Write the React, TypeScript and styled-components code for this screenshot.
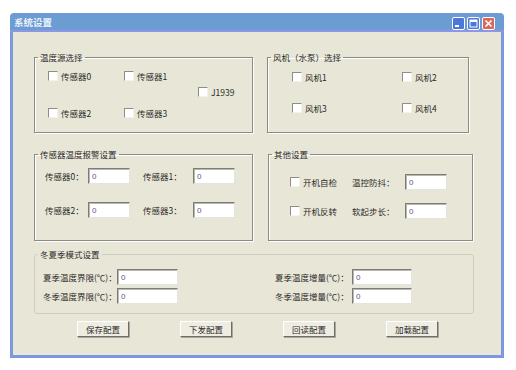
import { ReactElement } from 'react';
import styled, { createGlobalStyle } from 'styled-components';

const GlobalStyle = createGlobalStyle`
  html, body {
    margin: 0;
    padding: 0;
    background: #ffffff;
  }
  body {
    font-family: 'Noto Sans CJK SC', 'Liberation Sans', sans-serif;
  }
  #root {
    padding: 13px 0 0 10px;
  }
`;

const Window = styled.div`
  display: flex;
  flex-direction: column;
  width: 494px;
  height: 345px;
`;

const TitleBar = styled.div`
  align-items: center;
  background: #6b9cd2;
  border-bottom: 2px solid #9195e6;
  border-radius: 4px 4px 0 0;
  display: flex;
  height: 17px;
  justify-content: space-between;
  padding: 0 9px 0 4px;
`;

const Title = styled.span`
  color: #eef2fa;
  font-size: 9.5px;
  font-weight: 700;
  line-height: 12px;
`;

const TitleButtons = styled.div`
  display: flex;
  gap: 2px;
  margin-top: 3px;
`;

const TitleButton = styled.div<{ $close?: boolean }>`
  align-items: center;
  background: ${p => (p.$close ? '#d9675e' : '#4c78dc')};
  border: 1px solid #ffffff;
  border-radius: 2px;
  box-sizing: border-box;
  display: flex;
  height: 13px;
  justify-content: center;
  width: 13px;
`;

const Body = styled.div`
  background: #e8e6d6;
  border: 3px solid #7c98e0;
  border-top: none;
  display: flex;
  flex: 1;
  flex-direction: column;
  padding: 19px 0 0 21px;
`;

const Row = styled.div<{ $gap: number; $top: number }>`
  display: flex;
  gap: ${p => p.$gap}px;
  margin-top: ${p => p.$top}px;
`;

const Group = styled.fieldset<{ $w: number; $h: number; $soft?: boolean }>`
  border: 1px solid ${p => (p.$soft ? '#cfcebe' : '#8a8a82')};
  border-radius: ${p => (p.$soft ? '3px' : '0')};
  box-shadow: ${p => (p.$soft ? 'none' : '1px 1px 0 #ffffff, inset 1px 1px 0 #ffffff')};
  box-sizing: border-box;
  height: ${p => p.$h}px;
  margin: 0;
  min-width: 0;
  padding: 0;
  width: ${p => p.$w}px;
`;

const Legend = styled.legend`
  color: #2a2a2a;
  font-size: 8.5px;
  line-height: 12px;
  margin-left: 3px;
  padding: 0 2px;
`;

const Grid = styled.div<{ $cols: string; $rows: string; $rowGap?: number; $pad: string }>`
  align-items: start;
  display: grid;
  grid-template-columns: ${p => p.$cols};
  grid-template-rows: ${p => p.$rows};
  padding: ${p => p.$pad};
  row-gap: ${p => p.$rowGap ?? 0}px;
`;

const Check = styled.label<{ $col?: number; $row?: number; $h?: number }>`
  align-items: center;
  color: #2a2a2a;
  display: flex;
  font-size: 8.5px;
  gap: 3px;
  grid-column: ${p => p.$col ?? 'auto'};
  grid-row: ${p => p.$row ?? 'auto'};
  height: ${p => p.$h ?? 14}px;
  white-space: nowrap;
`;

const Box = styled.span`
  background: #ffffff;
  border: 1px solid;
  border-color: #8e8e86 #f2f2ee #f2f2ee #8e8e86;
  box-sizing: border-box;
  height: 10px;
  width: 10px;
`;

const FieldLabel = styled.span`
  align-items: center;
  color: #2a2a2a;
  display: flex;
  font-size: 8.5px;
  height: 16px;
  white-space: nowrap;
`;

const TextBox = styled.input<{ $w: number }>`
  background: #ffffff;
  border: 1px solid;
  border-color: #7d7d76 #e4e4de #e4e4de #7d7d76;
  box-shadow: inset 1px 1px 0 #b8b8b0;
  box-sizing: border-box;
  color: #6a4f8a;
  font-family: 'Liberation Sans', sans-serif;
  font-size: 8px;
  height: 16px;
  margin: 0;
  outline: none;
  padding: 0 0 0 3px;
  width: ${p => p.$w}px;
`;

const ButtonRow = styled.div`
  display: flex;
  gap: 51px;
  margin-top: 7px;
  padding-left: 43px;
`;

const Button = styled.button`
  background: #efede2;
  border: 1px solid;
  border-color: #ffffff #6e6e68 #6e6e68 #ffffff;
  box-shadow: 1px 1px 0 #a8a89e;
  color: #2a2a2a;
  font-family: 'Noto Sans CJK SC', sans-serif;
  font-size: 8.5px;
  height: 16px;
  line-height: 14px;
  padding: 0;
  width: 52px;
`;

function CheckItem({ text, col, row }: { text: string; col?: number; row?: number }): ReactElement {
  return (
    <Check $col={col} $row={row}>
      <Box />
      {text}
    </Check>
  );
}

function App(): ReactElement {
  return (
    <>
      <GlobalStyle />
      <Window>
        <TitleBar>
          <Title>系统设置</Title>
          <TitleButtons>
            <TitleButton>
              <svg width="9" height="9" viewBox="0 0 9 9">
                <rect x="1" y="6" width="4" height="2" fill="#ffffff" />
              </svg>
            </TitleButton>
            <TitleButton>
              <svg width="9" height="9" viewBox="0 0 9 9">
                <rect x="1" y="1" width="7" height="7" fill="none" stroke="#ffffff" strokeWidth="1" />
                <rect x="1" y="1" width="7" height="2" fill="#ffffff" />
              </svg>
            </TitleButton>
            <TitleButton $close>
              <svg width="9" height="9" viewBox="0 0 9 9">
                <path d="M1.5 1.5 L7.5 7.5 M7.5 1.5 L1.5 7.5" stroke="#ffffff" strokeWidth="1.6" />
              </svg>
            </TitleButton>
          </TitleButtons>
        </TitleBar>
        <Body>
          <Row $gap={14} $top={0}>
            <Group $w={219} $h={82}>
              <Legend>温度源选择</Legend>
              <Grid $cols="76px 74px auto" $rows="16px 21px 14px" $pad="6px 0 0 13px">
                <CheckItem text="传感器0" col={1} row={1} />
                <CheckItem text="传感器1" col={2} row={1} />
                <CheckItem text="J1939" col={3} row={2} />
                <CheckItem text="传感器2" col={1} row={3} />
                <CheckItem text="传感器3" col={2} row={3} />
              </Grid>
            </Group>
            <Group $w={202} $h={82}>
              <Legend>风机（水泵）选择</Legend>
              <Grid $cols="110px 110px" $rows="14px 14px" $rowGap={17} $pad="7px 0 0 24px">
                <CheckItem text="风机1" />
                <CheckItem text="风机2" />
                <CheckItem text="风机3" />
                <CheckItem text="风机4" />
              </Grid>
            </Group>
          </Row>

          <Row $gap={15} $top={15}>
            <Group $w={219} $h={93}>
              <Legend>传感器温度报警设置</Legend>
              <Grid $cols="43px 55px 50px 42px" $rows="16px 16px" $rowGap={18} $pad="8px 0 0 10px">
                <FieldLabel>传感器0：</FieldLabel>
                <TextBox $w={42} value="0" readOnly />
                <FieldLabel>传感器1：</FieldLabel>
                <TextBox $w={42} value="0" readOnly />
                <FieldLabel>传感器2：</FieldLabel>
                <TextBox $w={42} value="0" readOnly />
                <FieldLabel>传感器3：</FieldLabel>
                <TextBox $w={42} value="0" readOnly />
              </Grid>
            </Group>
            <Group $w={205} $h={93}>
              <Legend>其他设置</Legend>
              <Grid $cols="62px 53px 42px" $rows="16px 16px" $rowGap={13} $pad="14px 0 0 21px">
                <Check $h={16}>
                  <Box />
                  开机自检
                </Check>
                <FieldLabel>温控防抖：</FieldLabel>
                <TextBox $w={42} value="0" readOnly />
                <Check $h={16}>
                  <Box />
                  开机反转
                </Check>
                <FieldLabel>软起步长：</FieldLabel>
                <TextBox $w={42} value="0" readOnly />
              </Grid>
            </Group>
          </Row>

          <Row $gap={0} $top={7}>
            <Group $w={440} $h={66} $soft>
              <Legend>冬夏季模式设置</Legend>
              <Grid $cols="74px 158px 77px 60px" $rows="16px 16px" $rowGap={3} $pad="9px 0 0 8px">
                <FieldLabel>夏季温度界限(℃)：</FieldLabel>
                <TextBox $w={61} value="0" readOnly />
                <FieldLabel>夏季温度增量(℃)：</FieldLabel>
                <TextBox $w={60} value="0" readOnly />
                <FieldLabel>冬季温度界限(℃)：</FieldLabel>
                <TextBox $w={61} value="0" readOnly />
                <FieldLabel>冬季温度增量(℃)：</FieldLabel>
                <TextBox $w={60} value="0" readOnly />
              </Grid>
            </Group>
          </Row>

          <ButtonRow>
            <Button>保存配置</Button>
            <Button>下发配置</Button>
            <Button>回读配置</Button>
            <Button>加载配置</Button>
          </ButtonRow>
        </Body>
      </Window>
    </>
  );
}

export default App;
